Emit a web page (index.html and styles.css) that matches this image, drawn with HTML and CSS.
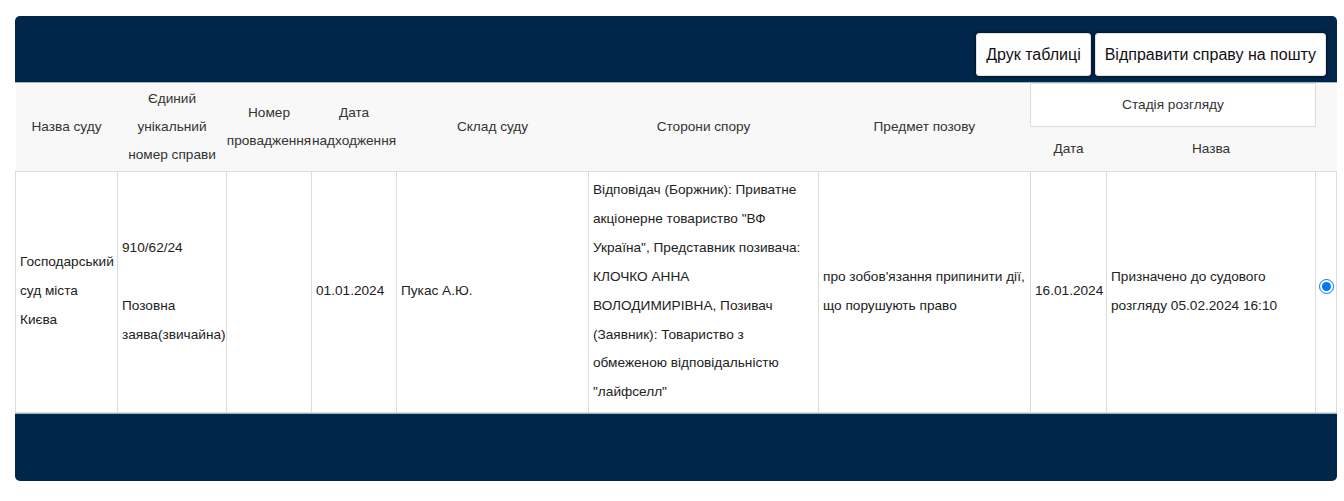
FILE: index.html
```html
<!DOCTYPE html>
<html lang="uk">
<head>
<meta charset="utf-8">
<link rel="stylesheet" href="styles.css">
</head>
<body>
<div class="panel">
  <div class="topbar">
    <button class="btn">Друк таблиці</button>
    <button class="btn">Відправити справу на пошту</button>
  </div>
  <table class="cases">
    <colgroup>
      <col class="c1"><col class="c2"><col class="c3"><col class="c4"><col class="c5">
      <col class="c6"><col class="c7"><col class="c8"><col class="c9"><col class="c10">
    </colgroup>
    <thead>
      <tr>
        <th rowspan="2">Назва суду</th>
        <th rowspan="2">Єдиний унікальний номер справи</th>
        <th rowspan="2">Номер провадження</th>
        <th rowspan="2">Дата надходження</th>
        <th rowspan="2">Склад суду</th>
        <th rowspan="2">Сторони спору</th>
        <th rowspan="2">Предмет позову</th>
        <th colspan="2" class="stage">Стадія розгляду</th>
        <th rowspan="2"></th>
      </tr>
      <tr>
        <th class="sub">Дата</th>
        <th class="sub">Назва</th>
      </tr>
    </thead>
    <tbody>
      <tr>
        <td>Господарський суд міста Києва</td>
        <td>910/62/24<br><br>Позовна заява(звичайна)</td>
        <td></td>
        <td>01.01.2024</td>
        <td>Пукас А.Ю.</td>
        <td>Відповідач (Боржник): Приватне акціонерне товариство "ВФ Україна", Представник позивача: КЛОЧКО АННА ВОЛОДИМИРІВНА, Позивач (Заявник): Товариство з обмеженою відповідальністю "лайфселл"</td>
        <td>про зобов'язання припинити дії, що порушують право</td>
        <td>16.01.2024</td>
        <td>Призначено до судового розгляду 05.02.2024 16:10</td>
        <td class="pick"><input type="radio" name="case" checked></td>
      </tr>
    </tbody>
  </table>
  <div class="footbar"></div>
</div>
</body>
</html>
```

FILE: styles.css
```css
html, body {
  margin: 0;
  padding: 0;
  background: #ffffff;
}

body {
  font-family: "Liberation Sans", Arial, sans-serif;
  color: #222;
}

.panel {
  width: 1322px;
  margin: 16px 0 0 15px;
}

.topbar {
  height: 67px;
  box-sizing: border-box;
  background: #00274b;
  border-radius: 5px 5px 0 0;
  border-bottom: 1px solid #9fb3c8;
  display: flex;
  justify-content: flex-end;
  align-items: flex-end;
  gap: 4px;
  padding: 0 11px 6px 0;
}

.btn {
  height: 43px;
  padding: 0 9px;
  background: #ffffff;
  border: 1px solid #e3e3e3;
  border-radius: 3px;
  box-shadow: 0 0 3px 1px rgba(0, 0, 0, 0.45);
  font-family: "Liberation Sans", Arial, sans-serif;
  font-size: 16px;
  color: #111;
}

.cases {
  width: 1321px;
  table-layout: fixed;
  border-collapse: collapse;
  font-size: 13.65px;
}

.c1 { width: 102px; }
.c2 { width: 109px; }
.c3 { width: 85px; }
.c4 { width: 85px; }
.c5 { width: 192px; }
.c6 { width: 230px; }
.c7 { width: 212px; }
.c8 { width: 76px; }
.c9 { width: 209px; }
.c10 { width: 21px; }

.cases thead th {
  background: #f8f8f8;
  font-weight: normal;
  color: #333;
  line-height: 28px;
  padding: 0;
  text-align: center;
  vertical-align: middle;
  height: 44px;
}

.cases thead th.stage {
  background: #ffffff;
  border: 1px solid #dcdcdc;
  height: 42px;
}

.cases tbody td {
  border: 1px solid #dcdcdc;
  line-height: 28.9px;
  padding: 4px 4px 5px;
  vertical-align: middle;
  height: 231px;
  background: #fff;
}

.cases tbody td.pick {
  padding: 0 0 4px 0;
  text-align: center;
}

.pick input {
  margin: 0 0 0 1px;
  width: 15px;
  height: 15px;
}

.footbar {
  height: 68px;
  box-sizing: border-box;
  background: #00274b;
  border-top: 1px solid #9fb3c8;
  border-radius: 0 0 5px 5px;
}
```
